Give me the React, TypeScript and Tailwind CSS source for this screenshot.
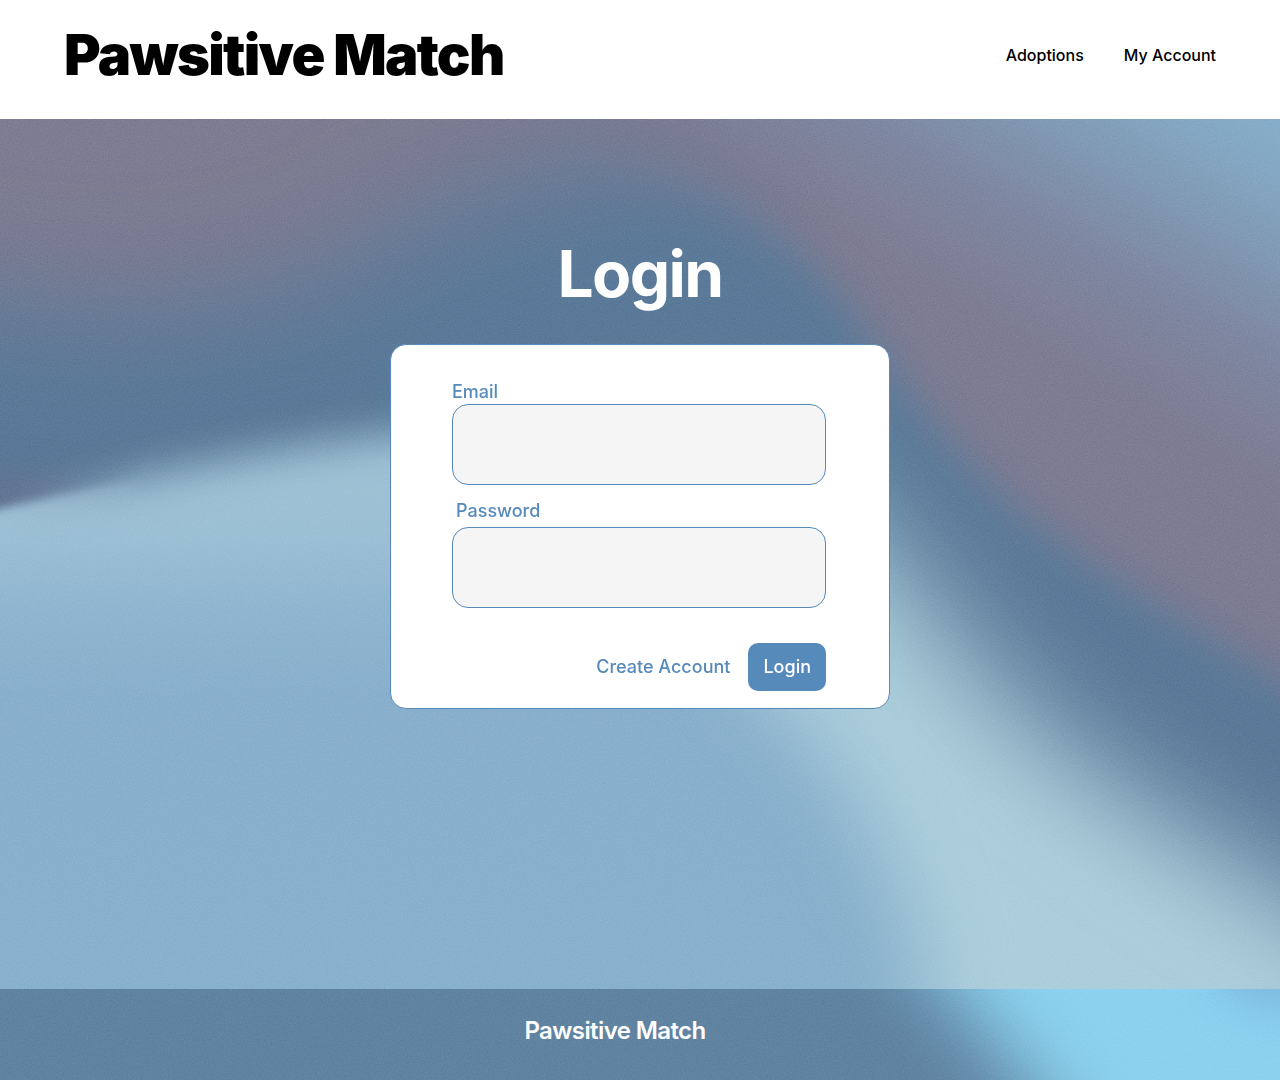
import React from "react";

const area = { filterUnits: "userSpaceOnUse" as const, x: -300, y: -300, width: 1880, height: 1500, colorInterpolationFilters: "sRGB" };

function Waves() {
  return (
    <svg aria-hidden="true" className="absolute inset-0 -z-10 size-full" viewBox="0 0 1280 870" preserveAspectRatio="none">
      <defs>
        <filter id="b5" {...area}><feGaussianBlur stdDeviation="5" /></filter>
        <filter id="b20" {...area}><feGaussianBlur stdDeviation="20" /></filter>
        <filter id="b40" {...area}><feGaussianBlur stdDeviation="40" /></filter>
        <filter id="b55" {...area}><feGaussianBlur stdDeviation="55" /></filter>
        <filter id="grain" x="0" y="0" width="100%" height="100%" colorInterpolationFilters="sRGB">
          <feTurbulence type="fractalNoise" baseFrequency="0.7" numOctaves="2" seed="4" />
          <feColorMatrix type="saturate" values="0" />
          <feComponentTransfer><feFuncA type="linear" slope="0" intercept="1" /></feComponentTransfer>
        </filter>
        <linearGradient id="sky" gradientUnits="userSpaceOnUse" x1="1120" y1="275" x2="1280" y2="0">
          <stop offset="0" stopColor="#7d7c92" />
          <stop offset="0.35" stopColor="#7e87a2" />
          <stop offset="0.6" stopColor="#8098b2" />
          <stop offset="0.85" stopColor="#84a8c4" />
          <stop offset="1" stopColor="#86aeca" />
        </linearGradient>
        <linearGradient id="water" gradientUnits="userSpaceOnUse" x1="0" y1="370" x2="0" y2="870">
          <stop offset="0" stopColor="#9ec1d4" />
          <stop offset="0.1" stopColor="#9bbfd4" />
          <stop offset="0.25" stopColor="#8fb5d0" />
          <stop offset="0.42" stopColor="#88afcc" />
          <stop offset="1" stopColor="#88b1cd" />
        </linearGradient>
        <linearGradient id="fadeL" gradientUnits="userSpaceOnUse" x1="0" y1="0" x2="150" y2="0">
          <stop offset="0" stopColor="#fff" />
          <stop offset="1" stopColor="#000" />
        </linearGradient>
        <linearGradient id="fadeR" gradientUnits="userSpaceOnUse" x1="560" y1="0" x2="840" y2="0">
          <stop offset="0" stopColor="#000" />
          <stop offset="1" stopColor="#fff" />
        </linearGradient>
        <mask id="left" maskUnits="userSpaceOnUse" x="-300" y="-300" width="1880" height="1500">
          <rect x="-300" y="-300" width="1880" height="1500" fill="url(#fadeL)" />
        </mask>
        <mask id="right" maskUnits="userSpaceOnUse" x="-300" y="-300" width="1880" height="1500">
          <rect x="-300" y="-300" width="1880" height="1500" fill="url(#fadeR)" />
        </mask>
        <mask id="deep" maskUnits="userSpaceOnUse" x="-300" y="-300" width="1880" height="1500">
          <path filter="url(#b55)" fill="#fff" d="M-300 160 L0 178 C150 205 280 180 380 125 C470 70 550 48 640 45 C730 50 800 90 860 180 L1280 570 L1600 800 V1200 H-300Z" />
          <g mask="url(#right)">
            <rect x="-300" y="-300" width="1880" height="1500" fill="#000" />
            <path filter="url(#b20)" fill="#fff" d="M400 65 C500 50 600 50 680 70 C760 95 810 140 850 190 C885 240 930 305 995 370 C1070 440 1170 492 1290 566 L1600 770 V1200 H400Z" />
          </g>
        </mask>
        <mask id="shore" maskUnits="userSpaceOnUse" x="-300" y="-300" width="1880" height="1500">
          <path filter="url(#b20)" fill="#fff" d="M-300 440 L0 387 C120 363 220 340 320 325 C380 317 440 310 500 300 L700 340 V1200 H-300Z" />
          <path filter="url(#b55)" fill="#fff" d="M500 350 L760 330 C850 380 900 455 990 560 C1060 635 1160 700 1290 775 L1600 970 V1200 H500Z" />
          <g mask="url(#left)">
            <rect x="-300" y="-300" width="1880" height="1500" fill="#000" />
            <path filter="url(#b5)" fill="#fff" d="M-300 450 L0 390 C100 368 200 342 320 325 L500 300 V1200 H-300Z" />
          </g>
        </mask>
      </defs>
      <rect width="1280" height="870" fill="url(#sky)" />
      <g mask="url(#deep)">
        <rect width="1280" height="870" fill="#5a7998" />
        <ellipse cx="-10" cy="380" rx="110" ry="20" fill="#6d6f90" opacity="0.7" filter="url(#b20)" />
      </g>
      <g mask="url(#shore)">
        <rect width="1280" height="870" fill="url(#water)" />
        <path filter="url(#b40)" fill="#accedb" d="M620 450 C740 530 800 600 855 680 C900 760 920 820 925 880 L940 1200 H1600 V300 H700Z" />
      </g>
      <rect className="mix-blend-overlay" width="1280" height="870" filter="url(#grain)" opacity="0.12" />
    </svg>
  );
}

function FooterWaves() {
  return (
    <svg aria-hidden="true" className="absolute inset-0 -z-10 size-full" viewBox="0 0 1280 91" preserveAspectRatio="none">
      <rect width="1280" height="91" fill="#6083a1" />
      <path filter="url(#b40)" fill="#8bd2ef" d="M835 -140 L1115 200 H1600 V-140Z" />
      <ellipse cx="1300" cy="-15" rx="90" ry="40" fill="#7ab2dc" opacity="0.7" filter="url(#b20)" />
      <rect className="mix-blend-overlay" width="1280" height="91" filter="url(#grain)" opacity="0.12" />
    </svg>
  );
}

function Field({ id, label, type, labelClass }: { id: string; label: string; type: string; labelClass: string }) {
  return (
    <div className="flex flex-col">
      <label htmlFor={id} className={labelClass}>{label}</label>
      <input id={id} type={type} className="h-[81px] w-full rounded-2xl border border-[#568abb] bg-[#f5f5f5] px-4 text-lg text-[#568abb] outline-none" />
    </div>
  );
}

export default function App() {
  return (
    <div className="flex min-h-screen flex-col bg-white font-['Inter',sans-serif]">
      <header className="flex items-start justify-between px-16 pt-[21px] pb-[30px]">
        <h1 className="text-[56px] leading-[68px] font-black tracking-[-0.03em] text-black">Pawsitive Match</h1>
        <nav className="flex gap-10 pt-[22px] text-base leading-6 font-medium text-black">
          <a href="#adoptions">Adoptions</a>
          <a href="#account">My Account</a>
        </nav>
      </header>

      <main className="relative isolate flex flex-1 flex-col items-center overflow-hidden px-4 pt-[115px] pb-16">
        <Waves />
        <h2 className="text-[64px] leading-[80px] font-bold tracking-tight text-white">Login</h2>
        <form className="mt-[30px] w-full max-w-[500px] rounded-2xl border border-[#568abb] bg-white pt-[35px] pr-[63px] pb-[17px] pl-[61px] text-lg text-[#568abb]">
          <Field id="email" label="Email" type="email" labelClass="font-medium leading-6" />
          <div className="mt-3.5">
            <Field id="password" label="Password" type="password" labelClass="pl-1 pb-1 font-medium leading-6" />
          </div>
          <div className="mt-[35px] flex items-center justify-end gap-[18px] font-medium">
            <a href="#create">Create Account</a>
            <button type="button" className="h-12 rounded-[10px] bg-[#568abb] px-[15px] text-white">Login</button>
          </div>
        </form>
      </main>

      <footer className="relative isolate flex justify-center overflow-hidden pt-[26px] pr-[50px] pb-[33px]">
        <FooterWaves />
        <p className="text-2xl leading-8 font-semibold tracking-tight text-white">Pawsitive Match</p>
      </footer>
    </div>
  );
}
